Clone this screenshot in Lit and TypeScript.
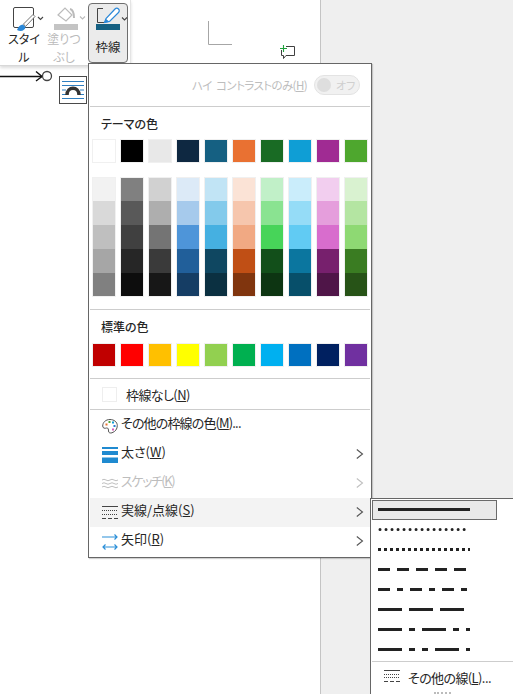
import { LitElement, html, css, svg } from "lit";
import { customElement } from "lit/decorators.js";

const THEME = ["#FFFFFF","#000000","#E8E8E8","#0E2841","#156082","#E97132","#196B24","#0F9ED5","#A02B93","#4EA72E"];
const TINTS = [
  ["#F2F2F2","#D9D9D9","#BFBFBF","#A6A6A6","#808080"],
  ["#808080","#595959","#404040","#262626","#0D0D0D"],
  ["#D1D1D1","#AEAEAE","#747474","#3A3A3A","#171717"],
  ["#DCEAF7","#A6CAEC","#4E95D9","#215F9A","#153D64"],
  ["#C1E4F5","#83CAEB","#45B0E1","#0F4761","#0B3041"],
  ["#FBE3D6","#F6C6AD","#F1A983","#C04F15","#80350E"],
  ["#C1F0C8","#8AE391","#47D459","#124F1A","#0D3512"],
  ["#CAEDFB","#95DCF7","#61CBF3","#0B769F","#074F6A"],
  ["#F2CEEF","#E59EDC","#D86DCD","#77206D","#4F1548"],
  ["#D9F2D0","#B4E5A2","#8ED973","#3A7C22","#275317"],
];
const STANDARD = ["#C00000","#FF0000","#FFC000","#FFFF00","#92D050","#00B050","#00B0F0","#0070C0","#002060","#7030A0"];
const DASHES: { d: string; cap?: string }[] = [
  { d: "" },
  { d: "0.01 6", cap: "round" },
  { d: "3 3" },
  { d: "12 7" },
  { d: "12 7 6 7" },
  { d: "24 7" },
  { d: "24 7 6 7" },
  { d: "24 7 6 7 6 7" },
];

const chevron = (color: string) => html`<svg class="chev" width="8" height="12" viewBox="0 0 8 12"><path d="M.8 1.5 L6.5 6 L.8 10.5" fill="none" stroke="${color}" stroke-width="1.1"/></svg>`;
const caret = (color: string) => svg`<path d="M0 0 L2.5 2.5 L5 0" fill="none" stroke="${color}" stroke-width="1.1"/>`;

@customElement("app-root")
export class AppRoot extends LitElement {
  static styles = css`
    :host { display: block; width: 513px; height: 694px; font-family: "Noto Sans CJK JP", "Noto Sans", sans-serif; color: #262626; font-feature-settings: "palt"; }
    .page { position: relative; width: 513px; height: 694px; overflow: hidden; display: flex; background: #fff; }
    .doc { width: 320px; border-right: 1px solid #c4c4c4; background: #fff; position: relative; flex: none; }
    .side { flex: 1; background: #efefef; }
    .ribbon { width: 130px; display: flex; background: #fff; border-right: 1px solid #e4e4e4; border-bottom: 1px solid #d8d8d8; box-shadow: 0 2px 3px rgba(0,0,0,.14); padding: 3px 0 0 0; box-sizing: content-box; height: 62px; }
    .rbtn { display: flex; flex-direction: column; align-items: center; font-size: 12px; line-height: 17.5px; text-align: center; box-sizing: border-box; }
    .rbtn svg { flex: none; display: block; overflow: visible; }
    .style { width: 48px; }
    .style svg, .fill svg { align-self: flex-start; }
    .fill { width: 40px; color: #bbb; padding-right: 8px; }
    .rbtn.active { width: 40px; height: 60px; background: #ebebeb; border: 1px solid #6e6e6e; border-radius: 4px; font-size: 12.5px; }
    .lbl { white-space: nowrap; }
    .active .lbl { margin-top: 4px; }
    .canvas-item { position: absolute; display: block; }
    .menu { position: absolute; left: 88px; top: 63px; width: 284px; height: 495px; box-sizing: border-box; background: #fff; border: 1px solid #666; box-shadow: 1px 1px 1px rgba(0,0,0,.18); display: flex; flex-direction: column; padding: 0 1px; font-size: 13px; }
    .contrast { height: 42px; display: flex; align-items: center; justify-content: flex-end; color: #bdbdbd; font-size: 11.5px; letter-spacing: -.6px; word-spacing: 2.5px; padding-right: 10px; gap: 7px; box-sizing: border-box; flex: none; }
    .toggle { width: 46px; height: 20px; box-sizing: border-box; border: 1px solid #e3e3e3; border-radius: 10px; background: #f1f1f1; display: flex; align-items: center; gap: 5px; padding-left: 2px; color: #cfcfcf; font-size: 11px; letter-spacing: 0; }
    .knob { width: 14px; height: 14px; border-radius: 50%; background: #dedede; flex: none; }
    .sep { height: 1px; background: #cdcdcd; flex: none; }
    .heading { font-size: 12px; font-weight: 500; line-height: 18px; padding-left: 11px; color: #262626; flex: none; }
    .theme-h { margin-top: 8px; }
    .std-h { margin-top: 8px; }
    .swatches { display: flex; gap: 4px; padding-left: 2px; flex: none; }
    .sw { width: 24px; height: 24px; box-sizing: border-box; border: 1px solid #f0f0f0; flex: none; }
    .theme-row { margin-top: 6px; }
    .tint-row { margin-top: 14px; margin-bottom: 12px; }
    .std-row { margin-top: 7px; margin-bottom: 11px; }
    .col { width: 24px; height: 120px; box-sizing: border-box; border: 1px solid #f0f0f0; display: flex; flex-direction: column; flex: none; }
    .col span { height: 24px; display: block; }
    .col span:first-child, .col span:last-child { height: 23px; }
    .none { height: 30px; display: flex; align-items: center; gap: 9px; padding-left: 12px; flex: none; box-sizing: border-box; }
    .none i { width: 15px; height: 15px; border: 1px solid #eee; display: block; box-sizing: border-box; flex: none; }
    .items { margin-top: 1px; display: flex; flex-direction: column; flex: none; }
    .item { height: 29px; display: flex; align-items: center; padding: 0 6px 0 12px; flex: none; box-sizing: border-box; }
    .item .ic { width: 16px; height: 16px; flex: none; margin-right: 3px; margin-top: 1px; display: block; }
    .item .tx { flex: 1; position: relative; top: -3px; white-space: nowrap; }
    .item.dis { color: #bdbdbd; }
    .item.hover { background: #f3f3f3; }
    .chev { flex: none; margin-top: -2px; }
    .tight { letter-spacing: -.6px; }
    .item .tight2 { letter-spacing: -.85px; }
    .tighter { letter-spacing: -1.4px; }
    u { text-underline-offset: 1px; }
    .sub { position: absolute; left: 370px; top: 498px; width: 150px; height: 200px; box-sizing: border-box; background: #fff; border: 1px solid #666; padding: 1px 0 0 1px; display: flex; flex-direction: column; font-size: 13px; }
    .ln { height: 20px; flex: none; display: flex; align-items: center; box-sizing: border-box; width: 125px; padding: 0 0 1px 5px; border: 1px solid transparent; }
    .ln.sel { background: #e9e9e9; border-color: #6a6a6a; }
    .ln svg { display: block; }
    .sub .sep { margin-top: 1px; }
    .more { display: flex; align-items: center; height: 30px; padding-left: 12px; gap: 8px; flex: none; box-sizing: border-box; }
    .grip { height: 2px; flex: none; width: 17px; margin-left: 62px; border-top: 2px dotted #bbb; }
  `;

  render() {
    return html`<div class="page">
      <div class="doc">
        <div class="ribbon">
          <div class="rbtn style">
            <svg width="45" height="27" viewBox="0 0 45 27">
              <rect x="13.5" y="4.5" width="20" height="20" rx="1.5" fill="none" stroke="#444" stroke-width="1"/>
              <path d="M17 27 C18 24 20 21.5 23 21.5 L25.5 24 C25 27.5 21 29 17 27 Z" fill="#2b88d8"/>
              <path d="M23.5 21 L33 11.5 L35 13.5 L25.5 23.5 Z" fill="#fff" stroke="#666" stroke-width=".9"/>
              <g transform="translate(38 14)">${caret("#444")}</g>
            </svg>
            <div class="lbl">スタイ<br />ル</div>
          </div>
          <div class="rbtn fill">
            <svg width="40" height="27" viewBox="0 0 40 27">
              <g transform="translate(-3 0)">
                <path d="M13 12 L20 5 L27 12 L21 18 Z" fill="none" stroke="#bbb" stroke-width="1.2"/>
                <path d="M25 6 q4 1 4 9" fill="none" stroke="#bbb" stroke-width="2"/>
              </g>
              <rect x="6" y="21" width="24" height="6" fill="#c4c4c4"/>
              <g transform="translate(32 13.5)">${caret("#bbb")}</g>
            </svg>
            <div class="lbl">塗りつ<br />ぶし</div>
          </div>
          <div class="rbtn active">
            <svg width="38" height="30" viewBox="0 0 38 30">
              <path d="M14 4.5 H8.5 V18.5 H15" fill="none" stroke="#444" stroke-width="1"/>
              <path d="M15.5 18.5 L17 14.5 L26 5 C27 4 28.5 4 29.5 5 C30.5 6 30.5 7.5 29.5 8.5 L20.5 17.5 Z" fill="#fff" stroke="#2b88d8" stroke-width="1.2"/>
              <path d="M15 19 L17 15 L20.5 17.8 Z" fill="#2b88d8"/>
              <rect x="7" y="20" width="24" height="6" fill="#156082"/>
              <g transform="translate(33 13.5)">${caret("#444")}</g>
            </svg>
            <div class="lbl">枠線</div>
          </div>
        </div>
        <svg class="canvas-item" style="left:208px;top:21px" width="25" height="24" viewBox="0 0 25 24"><path d="M.5 0 V23.5 H24" fill="none" stroke="#a6a6a6"/></svg>
        <svg class="canvas-item" style="left:280px;top:45px" width="16" height="16" viewBox="0 0 16 16">
          <path d="M6 1.5 H14.5 V10.5 H6 L3.5 13.5 V10.5 H1.5 V5" fill="#fff" stroke="#404040"/>
          <path d="M0 3.5 H7 M3.5 0 V7" stroke="#1fa03c" stroke-width="1.1" fill="none"/>
        </svg>
        <svg class="canvas-item" style="left:0;top:68px" width="54" height="16" viewBox="0 0 54 16">
          <path d="M0 8.5 H42" stroke="#111" stroke-width="1.6"/>
          <path d="M36 3.5 L42 8.5 L36 13" fill="none" stroke="#111" stroke-width="1.4"/>
          <circle cx="47" cy="8" r="4.5" fill="#fff" stroke="#444" stroke-width="1.3"/>
        </svg>
        <svg class="canvas-item" style="left:59px;top:76px" width="28" height="28" viewBox="0 0 28 28">
          <rect x=".5" y=".5" width="27" height="27" fill="#fff" stroke="#4a4a4a"/>
          <path d="M3 5.5 H25 M3 9.5 H25 M3 14 H7 M21 14 H25 M3 18.5 H7 M21 18.5 H25 M3 22.5 H25" stroke="#2f7fc1"/>
          <path d="M8 19 C8 10 20 10 20 19" fill="none" stroke="#333" stroke-width="3.5"/>
        </svg>
      </div>
      <div class="side"></div>

      <div class="menu">
        <div class="contrast">
          <span>ハイ コントラストのみ(<u>H</u>)</span>
          <div class="toggle"><span class="knob"></span><span>オフ</span></div>
        </div>
        <div class="sep"></div>
        <div class="heading theme-h">テーマの色</div>
        <div class="swatches theme-row">${THEME.map((c) => html`<div class="sw" style="background:${c}"></div>`)}</div>
        <div class="swatches tint-row">${TINTS.map((col) => html`<div class="col">${col.map((c) => html`<span style="background:${c}"></span>`)}</div>`)}</div>
        <div class="sep"></div>
        <div class="heading std-h">標準の色</div>
        <div class="swatches std-row">${STANDARD.map((c) => html`<div class="sw" style="background:${c}"></div>`)}</div>
        <div class="sep"></div>
        <div class="none"><i></i><span class="tight">枠線なし(<u>N</u>)</span></div>
        <div class="sep"></div>
        <div class="items">
        <div class="item">
          <svg class="ic" viewBox="0 0 16 16">
            <path d="M8 1.5 C3.5 1.5 .7 4.5 .7 8 C.7 10.5 3 10.5 4.5 10 C6.5 9.5 6.5 12 6.5 13 C6.5 15 8.5 15.3 10 14.8 C13.5 13.5 15.3 11 15.3 7.5 C15.3 4 12 1.5 8 1.5 Z" fill="#fff" stroke="#555"/>
            <rect x="3.5" y="5.5" width="2" height="2" fill="#e8742f"/><rect x="6.5" y="3" width="2" height="2" fill="#4ea72e"/><rect x="10" y="3.5" width="2" height="2" fill="#0f9ed5"/><rect x="11.5" y="7" width="2" height="2" fill="#2b7cd3"/><rect x="10" y="10.5" width="2" height="2" fill="#d85ab8"/>
          </svg>
          <span class="tx tight2">その他の枠線の色(<u>M</u>)...</span>
        </div>
        <div class="item">
          <svg class="ic" viewBox="0 0 16 16"><path d="M0 1 H16" stroke="#1f8ad0" stroke-width="2"/><path d="M0 6 H16" stroke="#1f8ad0" stroke-width="4"/><path d="M0 13.25 H16" stroke="#1f8ad0" stroke-width="5.5"/></svg>
          <span class="tx">太さ(<u>W</u>)</span>${chevron("#555")}
        </div>
        <div class="item dis">
          <svg class="ic" viewBox="0 0 16 16"><path d="M0 4 q2 -1.5 4 0 t4 0 t4 0 t4 0 M0 7.5 q2 -1.5 4 0 t4 0 t4 0 t4 0 M0 11 q2 -1.5 4 0 t4 0 t4 0 t4 0" fill="none" stroke="#c0c0c0"/></svg>
          <span class="tx tighter">スケッチ(<u>K</u>)</span>${chevron("#c0c0c0")}
        </div>
        <div class="item hover">
          <svg class="ic" viewBox="0 0 16 16"><path d="M0 1.5 H16" stroke="#444"/><path d="M0 5.5 H16 M0 9.5 H16" stroke="#444" stroke-dasharray="1 1"/><path d="M0 13.5 H16" stroke="#444" stroke-dasharray="4 2"/></svg>
          <span class="tx">実線/点線(<u>S</u>)</span>${chevron("#555")}
        </div>
        <div class="item">
          <svg class="ic" viewBox="0 0 16 16"><path d="M0 3 H15 M12.5 .5 L15 3 L12.5 5.5 M3.5 10.5 L1 13 L3.5 15.5 M12.5 10.5 L15 13 L12.5 15.5 M1 13 H15" fill="none" stroke="#2b8fd8" stroke-width="1.2"/></svg>
          <span class="tx">矢印(<u>R</u>)</span>${chevron("#555")}
        </div>
        </div>
      </div>

      <div class="sub">
        ${DASHES.map((l, i) => html`<div class="ln ${i === 0 ? "sel" : ""}">
          <svg width="92" height="3" viewBox="0 0 92 3"><path d="M${l.cap ? 2 : 0} 1.5 H92" stroke="#222" stroke-width="3" stroke-dasharray="${l.d || "none"}" stroke-linecap="${l.cap ?? "butt"}"/></svg>
        </div>`)}
        <div class="sep"></div>
        <div class="more">
          <svg width="16" height="14" viewBox="0 0 16 14"><path d="M0 .5 H16" stroke="#444"/><path d="M0 4.5 H16 M0 7.5 H16" stroke="#444" stroke-dasharray="1 1"/><path d="M0 11.5 H16" stroke="#444" stroke-dasharray="4 2"/></svg>
          <span class="tight">その他の線(<u>L</u>)...</span>
        </div>
        <div class="grip"></div>
      </div>
    </div>`;
  }
}
